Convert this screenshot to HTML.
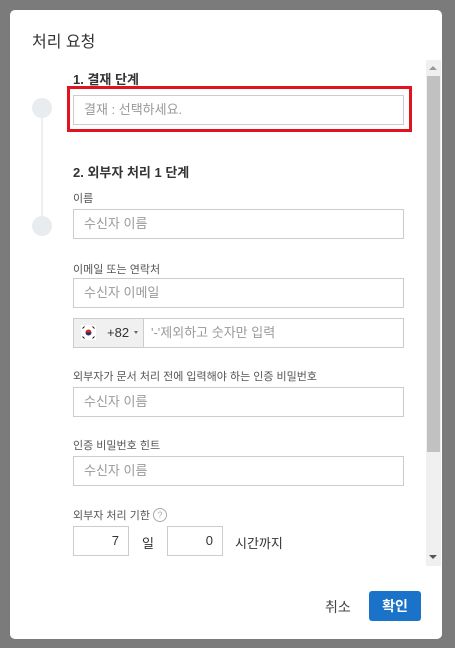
<!DOCTYPE html>
<html><head><meta charset="utf-8"><style>
*{box-sizing:border-box;margin:0;padding:0}
body{width:455px;height:648px;background:#7b7b7b;position:relative;overflow:hidden;font-family:"Liberation Sans","Noto Sans CJK KR",sans-serif;color:#333}
.a{position:absolute}
.m{left:10px;top:10px;width:432px;height:629px;background:#fff;border-radius:5px}
.in{position:absolute;left:73px;width:331px;height:30px;border:1px solid #ccc;font-size:13px;color:#999;padding-left:10px;line-height:28px;background:#fff}
.lb{position:absolute;left:73px;font-size:11px;color:#555}
.h{position:absolute;left:73px;font-size:13px;font-weight:bold;color:#333}
.c{position:absolute;left:32px;width:20px;height:20px;border-radius:50%;background:#e9ecef}
</style></head><body>
<div class="a m"></div>
<div class="a" style="left:32px;top:28px;font-size:16px;color:#333">처리 요청</div>
<div class="a" style="left:426px;top:60px;width:15px;height:506px;background:#f0f0f0"></div>
<div class="a" style="left:427px;top:76px;width:13px;height:376px;background:#c1c1c1"></div>
<div class="a" style="left:429px;top:66px;width:0;height:0;border-left:4px solid transparent;border-right:4px solid transparent;border-bottom:4px solid #999"></div>
<div class="a" style="left:429px;top:555px;width:0;height:0;border-left:4px solid transparent;border-right:4px solid transparent;border-top:4px solid #555"></div>
<div class="a" style="left:41px;top:118px;width:2px;height:100px;background:#eceef0"></div>
<div class="c" style="top:98px"></div>
<div class="c" style="top:216px"></div>
<div class="h" style="top:69px">1. 결재 단계</div>
<div class="a" style="left:67px;top:86px;width:345px;height:46px;border:3px solid #e0141e"></div>
<div class="in" style="top:95px">결재 : 선택하세요.</div>
<div class="h" style="top:162px">2. 외부자 처리 1 단계</div>
<div class="lb" style="top:190px">이름</div>
<div class="in" style="top:209px">수신자 이름</div>
<div class="lb" style="top:261px">이메일 또는 연락처</div>
<div class="in" style="top:278px">수신자 이메일</div>
<div class="in" style="top:318px;padding-left:0">
 <div class="a" style="left:0;top:0;width:70px;height:28px;background:#f0f0f0;border-right:1px solid #ccc"></div>
 <svg class="a" style="left:7px;top:6px" width="15" height="15" viewBox="0 0 15 15"><rect width="15" height="15" fill="#fff"/><path d="M4.5 7.5a3 3 0 0 1 6 0z" fill="#d22"/><path d="M4.5 7.5a3 3 0 0 0 6 0z" fill="#236"/><g stroke="#222" stroke-width="1"><path d="M1.5 3.5l2-2M11.5 1.5l2 2M1.5 11.5l2 2M13.5 11.5l-2 2"/></g></svg>
 <div class="a" style="left:33px;top:0;color:#333">+82</div>
 <div class="a" style="left:60px;top:12px;border-left:2.5px solid transparent;border-right:2.5px solid transparent;border-top:3px solid #666"></div>
 <div class="a" style="left:77px;top:0;color:#999">'-'제외하고 숫자만 입력</div>
</div>
<div class="lb" style="top:368px">외부자가 문서 처리 전에 입력해야 하는 인증 비밀번호</div>
<div class="in" style="top:387px">수신자 이름</div>
<div class="lb" style="top:437px">인증 비밀번호 힌트</div>
<div class="in" style="top:456px">수신자 이름</div>
<div class="lb" style="top:507px">외부자 처리 기한</div>
<div class="a" style="left:153px;top:508px;width:14px;height:14px;border:1px solid #aaa;border-radius:50%;font-size:9px;color:#aaa;text-align:center;line-height:12px">?</div>
<div class="in" style="top:526px;width:56px;text-align:right;padding:0 9px;color:#333">7</div>
<div class="a" style="left:142px;top:533px;font-size:13px">일</div>
<div class="in" style="top:526px;left:167px;width:56px;text-align:right;padding:0 9px;color:#333">0</div>
<div class="a" style="left:235px;top:533px;font-size:13px">시간까지</div>
<div class="a" style="left:325px;top:597px;font-size:14px;color:#444">취소</div>
<div class="a" style="left:369px;top:591px;width:52px;height:30px;background:#1a73c8;border-radius:3px;color:#fff;font-size:14px;font-weight:bold;text-align:center;line-height:30px">확인</div>
</body></html>
